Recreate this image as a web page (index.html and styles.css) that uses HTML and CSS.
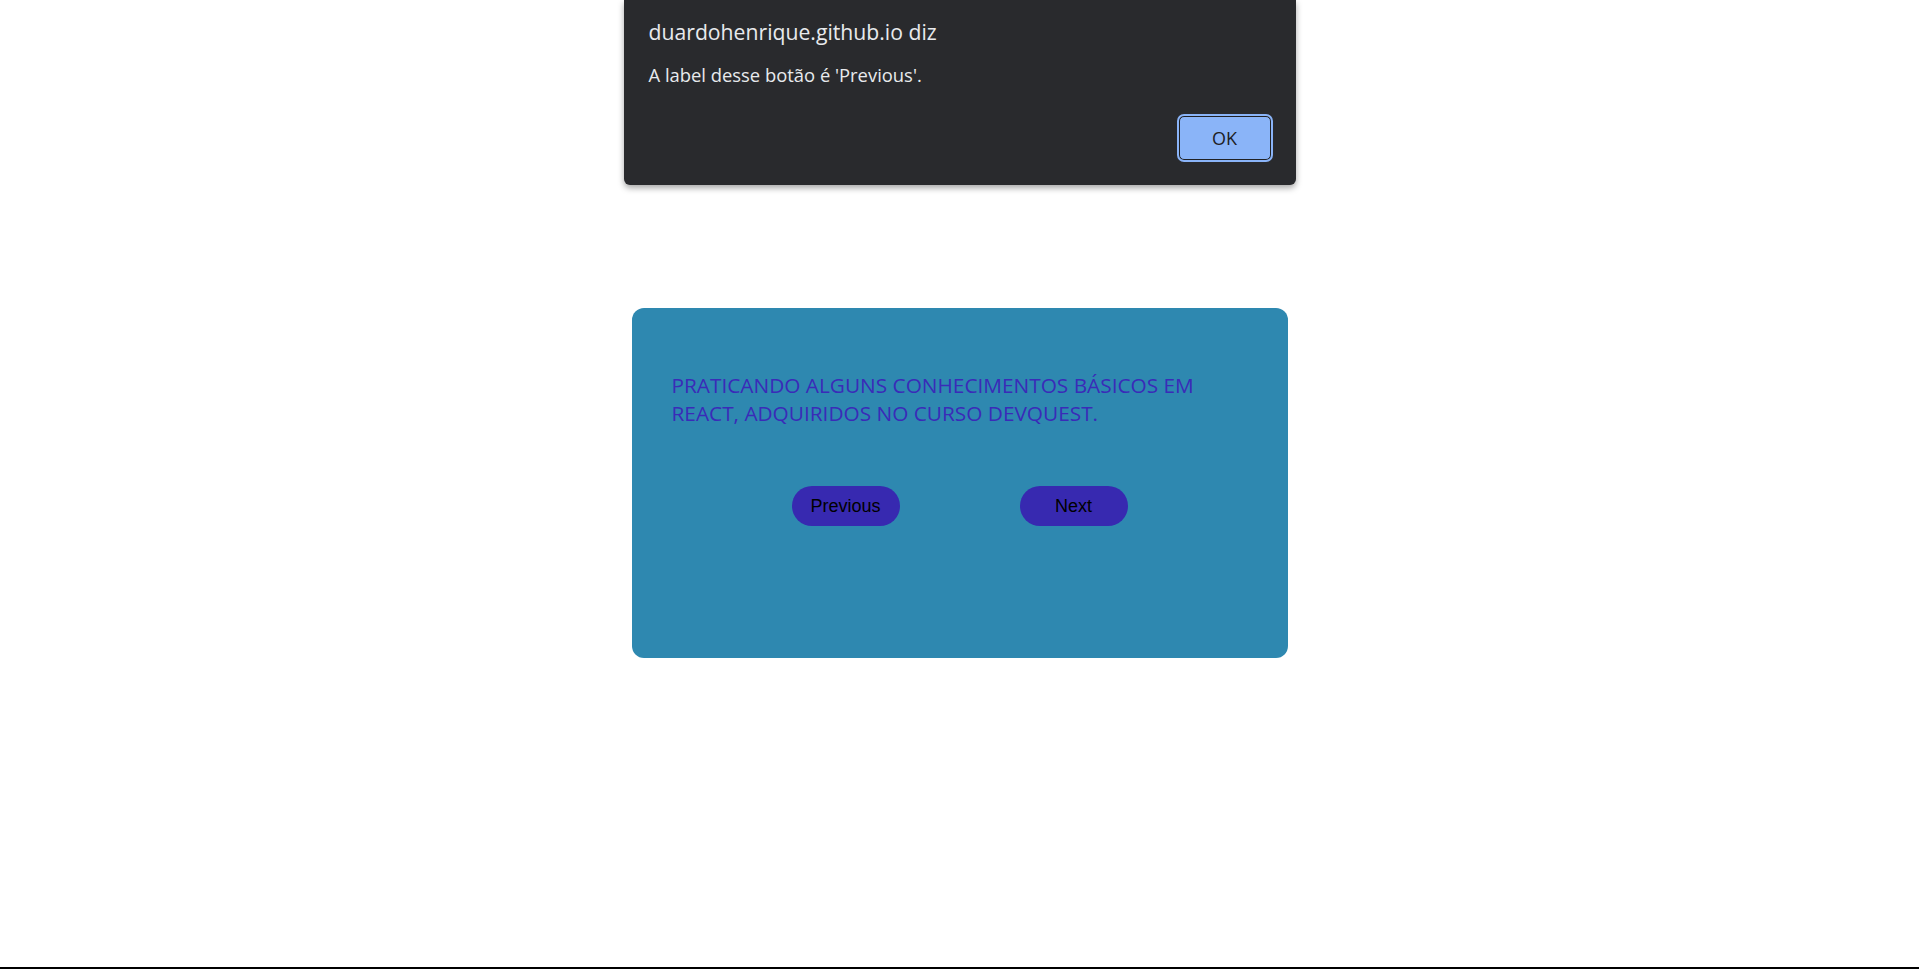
FILE: index.html
```html
<!DOCTYPE html>
<html lang="pt-BR">
<head>
<meta charset="utf-8">
<title>DevQuest</title>
<link rel="stylesheet" href="styles.css">
</head>
<body>
<div class="page">
  <main class="card">
    <p class="card-text">Praticando alguns conhecimentos básicos em React, adquiridos no curso DevQuest.</p>
    <div class="actions">
      <button class="pill">Previous</button>
      <button class="pill">Next</button>
    </div>
  </main>
</div>
<div class="alert" role="alertdialog">
  <div class="alert-title">duardohenrique.github.io diz</div>
  <div class="alert-msg">A label desse botão é 'Previous'.</div>
  <div class="alert-footer">
    <button class="alert-ok">OK</button>
  </div>
</div>
</body>
</html>
```
FILE: styles.css
```css
html, body {
  margin: 0;
  padding: 0;
  background: #ffffff;
}

.page {
  height: 100vh;
  box-sizing: border-box;
  border-bottom: 2px solid #000;
  display: flex;
  flex-direction: column;
  align-items: center;
  padding-top: 308px;
}

.card {
  width: 656px;
  height: 350px;
  box-sizing: border-box;
  background: #2e88b0;
  border-radius: 12px;
  padding: 63px 40px 0 40px;
}

.card-text {
  margin: 0;
  width: 560px;
  font-family: "Open Sans", "Noto Sans", sans-serif;
  font-size: 20.8px;
  line-height: 28px;
  text-transform: uppercase;
  color: #3a2bb8;
}

.actions {
  display: flex;
  justify-content: center;
  gap: 120px;
  margin-top: 59px;
}

.pill {
  width: 108px;
  height: 40px;
  border: none;
  border-radius: 20px;
  background: #3729b0;
  color: #000;
  font-family: "Liberation Sans", Arial, sans-serif;
  font-size: 18px;
  padding: 0;
  cursor: pointer;
}

.alert {
  position: absolute;
  top: 0;
  left: 0;
  right: 0;
  margin: 0 auto;
  width: 672px;
  height: 185px;
  box-sizing: border-box;
  background: #292a2d;
  border-radius: 0 0 6px 6px;
  box-shadow: 0 3px 6px rgba(0, 0, 0, 0.35);
  padding: 17px 25px 0 25px;
  font-family: "Open Sans", "Noto Sans", sans-serif;
  color: #e8eaed;
}

.alert-title {
  font-size: 21.2px;
  line-height: 30px;
}

.alert-msg {
  margin-top: 15px;
  font-size: 18.4px;
  line-height: 26px;
}

.alert-footer {
  display: flex;
  justify-content: flex-end;
  margin-top: 28px;
}

.alert-ok {
  width: 92px;
  height: 44px;
  box-sizing: border-box;
  background: #8ab4f8;
  border: 1px solid #202124;
  border-radius: 5px;
  outline: 2px solid #8ab4f8;
  outline-offset: 0;
  color: #202124;
  font-family: "Open Sans", "Noto Sans", sans-serif;
  font-size: 18px;
  padding: 0;
}
```
